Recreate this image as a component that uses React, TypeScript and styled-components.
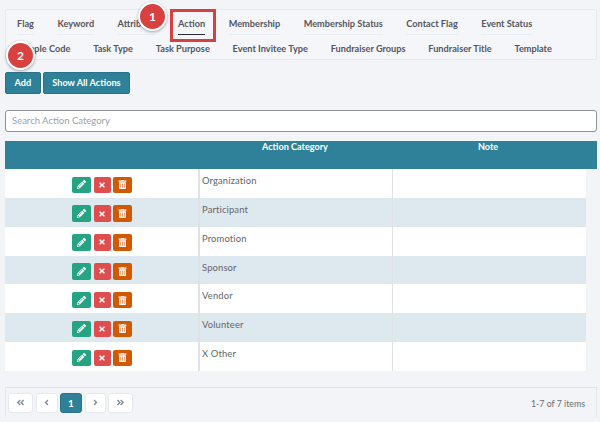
import React from "react";
import styled, { createGlobalStyle } from "styled-components";
import { FaPencilAlt, FaTimes, FaTrashAlt, FaAngleDoubleLeft, FaAngleLeft, FaAngleRight, FaAngleDoubleRight } from "react-icons/fa";

const Global = createGlobalStyle`
  html, body { margin: 0; padding: 0; background: #f2f4f8; }
  body { font-family: Lato, "Liberation Sans", sans-serif; width: 600px; height: 422px; overflow: hidden; }
  * { box-sizing: border-box; }
`;
const Page = styled.div`
  position: relative; width: 600px; height: 422px; padding: 9px 3px 0 5px;
  display: flex; flex-direction: column;
`;
const TabPanel = styled.div`
  height: 51px; border: 1px solid #e6ebf0; border-radius: 2px; background: #f4f6fa;
  padding: 0 0 0 11px; display: flex; flex-direction: column;
`;
const TabRow = styled.div<{ $gap: number }>`
  display: flex; column-gap: ${p => p.$gap}px;
`;
const Tab = styled.div<{ $active?: boolean; $plain?: boolean }>`
  height: 25px; padding-top: 7.5px; font-size: 9.2px; line-height: 12px; font-weight: 700; color: #55555f; white-space: nowrap;
  border-bottom: ${p => p.$plain ? "0" : p.$active ? "1px solid #2b2b33" : "1px solid #e7edf1"};
`;
const Actions = styled.div`
  display: flex; gap: 2px; margin-top: 12px;
`;
const PrimaryButton = styled.button`
  height: 22px; padding: 0 8.5px; background: #2f8199; border: 1px solid #2a7489; border-radius: 2px;
  color: #fff; font: 700 9.2px/20px Lato, sans-serif;
`;
const Search = styled.div`
  margin-top: 16px; height: 22px; background: #fff; border: 1px solid #8f9194; border-radius: 3px;
  padding-left: 6px; font-size: 9.5px; line-height: 20px; color: #9aa3aa;
`;
const TableHead = styled.div`
  margin-top: 9px; height: 28px; background: #2f8199; display: grid; grid-template-columns: 195px 193px 1fr;
  color: #fff; font-size: 9.1px; font-weight: 700; line-height: 11px;
`;
const HeadCell = styled.div``;
const HeadLabel = styled.div<{ $shift: number }>`
  padding-left: ${p => p.$shift}px; white-space: nowrap;
`;
const TableBody = styled.div`
  width: 581px; background: #fff;
`;
const Row = styled.div<{ $alt: boolean }>`
  height: 28.85px; display: grid; grid-template-columns: 195px 193px 1fr; background: ${p => p.$alt ? "#dee8ef" : "#fff"};
`;
const ButtonsCell = styled.div`
  display: flex; justify-content: center; align-items: flex-start; gap: 2.5px; padding: 7.5px 0 0 1px;
  border-right: 2px solid #dfe2e6;
`;
const TextCell = styled.div<{ $note?: boolean }>`
  padding: 6px 0 0 2px; font-size: 9.4px; line-height: 12px; color: #63656b; letter-spacing: .15px;
  border-right: ${p => p.$note ? "0" : "1px solid #dfe2e6"};
`;
const IconBtn = styled.div<{ $bg: string; $w: number }>`
  width: ${p => p.$w}px; height: 16.5px; border-radius: 2px; background: ${p => p.$bg}; color: #fff;
  display: flex; align-items: center; justify-content: center;
`;
const Footer = styled.div`
  margin-top: 16px; height: 30px; border-top: 1px solid #dfe2e8; border-left: 1px solid #e4e7ec; border-right: 1px solid #e4e7ec;
  display: flex; align-items: flex-start; justify-content: space-between; padding: 5px 11px 0 2px;
`;
const Pager = styled.div`
  display: flex; gap: 2.5px;
`;
const PageBtn = styled.div<{ $w: number; $on?: boolean }>`
  width: ${p => p.$w}px; height: 20px; border-radius: 3px; display: flex; align-items: center; justify-content: center;
  background: ${p => p.$on ? "#2f8199" : "#fff"}; border: 1px solid ${p => p.$on ? "#2a7489" : "#e6e9ee"};
  color: ${p => p.$on ? "#fff" : "#7d8a97"}; font-size: 10px; font-weight: 700;
`;
const Count = styled.div`
  font-size: 8.8px; line-height: 12px; color: #6b6d72; padding-top: 5px;
`;
const Highlight = styled.div`
  position: absolute; left: 170px; top: 9px; width: 46px; height: 33px; border: 3px solid #d8403f;
`;
const Badge = styled.div<{ $x: number; $y: number }>`
  position: absolute; left: ${p => p.$x}px; top: ${p => p.$y}px; width: 29px; height: 29px; border-radius: 50%;
  background: #d94141; border: 2px solid #fff; box-shadow: 0 1px 3px rgba(0,0,0,.35); color: #fff;
  display: flex; align-items: center; justify-content: center; font-size: 12px; font-weight: 700;
`;

const row1 = ["Flag", "Keyword", "Attribute", "Action", "Membership", "Membership Status", "Contact Flag", "Event Status"];
const row2 = ["Sample Code", "Task Type", "Task Purpose", "Event Invitee Type", "Fundraiser Groups", "Fundraiser Title", "Template"];
const cats = ["Organization", "Participant", "Promotion", "Sponsor", "Vendor", "Volunteer", "X Other"];

export default function App() {
  return (
    <Page>
      <Global />
      <TabPanel>
        <TabRow $gap={23.5}>
          {row1.map(t => <Tab key={t} $active={t === "Action"}>{t}</Tab>)}
        </TabRow>
        <TabRow $gap={22.8}>
          {row2.map(t => <Tab key={t} $plain>{t}</Tab>)}
        </TabRow>
      </TabPanel>
      <Actions>
        <PrimaryButton>Add</PrimaryButton>
        <PrimaryButton>Show All Actions</PrimaryButton>
      </Actions>
      <Search>Search Action Category</Search>
      <TableHead>
        <HeadCell />
        <HeadCell><HeadLabel $shift={62}>Action Category</HeadLabel></HeadCell>
        <HeadCell><HeadLabel $shift={85}>Note</HeadLabel></HeadCell>
      </TableHead>
      <TableBody>
        {cats.map((c, i) => (
          <Row key={c} $alt={i % 2 === 1}>
            <ButtonsCell>
              <IconBtn $bg="#25a383" $w={19}><FaPencilAlt size={9} /></IconBtn>
              <IconBtn $bg="#df4e4e" $w={17}><FaTimes size={8} /></IconBtn>
              <IconBtn $bg="#d15a00" $w={19}><FaTrashAlt size={9} /></IconBtn>
            </ButtonsCell>
            <TextCell>{c}</TextCell>
            <TextCell $note />
          </Row>
        ))}
      </TableBody>
      <Footer>
        <Pager>
          <PageBtn $w={25}><FaAngleDoubleLeft size={9} /></PageBtn>
          <PageBtn $w={22}><FaAngleLeft size={9} /></PageBtn>
          <PageBtn $w={22} $on>1</PageBtn>
          <PageBtn $w={21}><FaAngleRight size={9} /></PageBtn>
          <PageBtn $w={25}><FaAngleDoubleRight size={9} /></PageBtn>
        </Pager>
        <Count>1-7 of 7 items</Count>
      </Footer>
      <Highlight />
      <Badge $x={138} $y={2}>1</Badge>
      <Badge $x={6} $y={41}>2</Badge>
    </Page>
  );
}
